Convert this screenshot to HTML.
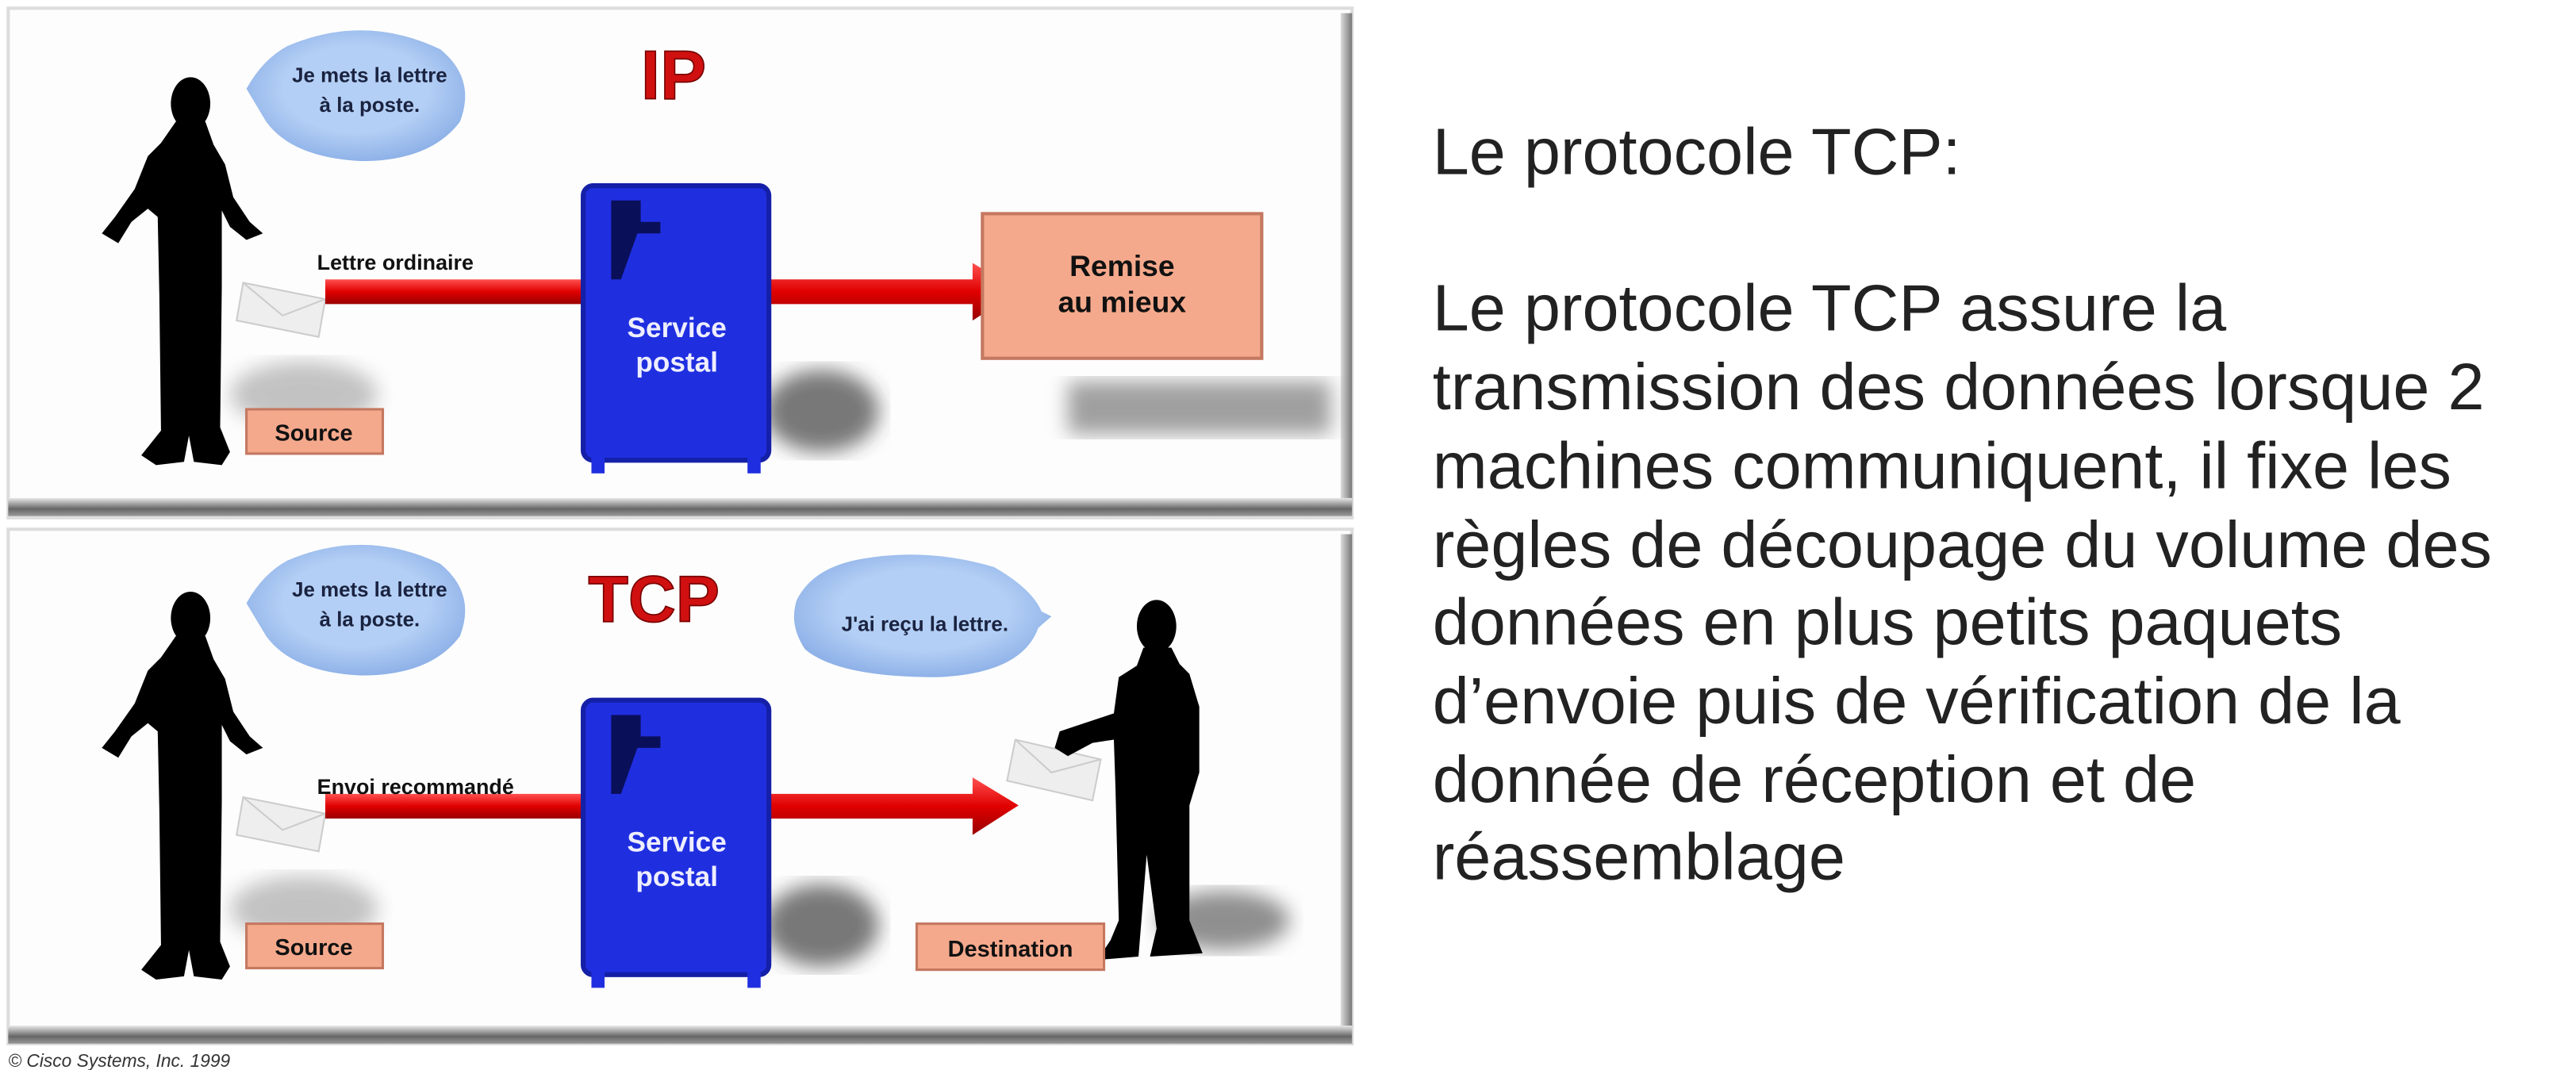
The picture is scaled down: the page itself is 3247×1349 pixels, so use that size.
<!DOCTYPE html>
<html><head><meta charset="utf-8"><style>
html,body{margin:0;padding:0;background:#fff;overflow:hidden}
svg{display:block}
</style></head><body>
<svg width="3247" height="1349" viewBox="0 0 1568 651" preserveAspectRatio="none" xmlns="http://www.w3.org/2000/svg">
<defs>
<linearGradient id="bb" x1="0" y1="0" x2="0" y2="1"><stop offset="0" stop-color="#e8e8e8"/><stop offset="0.6" stop-color="#666"/><stop offset="1" stop-color="#999"/></linearGradient>
<linearGradient id="rb" x1="0" y1="0" x2="1" y2="0"><stop offset="0" stop-color="#ddd"/><stop offset="1" stop-color="#777"/></linearGradient>
<linearGradient id="arr" x1="0" y1="0" x2="0" y2="1"><stop offset="0" stop-color="#ff5050"/><stop offset="0.5" stop-color="#e00000"/><stop offset="1" stop-color="#900"/></linearGradient>
<radialGradient id="bub" cx="0.5" cy="0.45" r="0.55"><stop offset="0.6" stop-color="#b4cff5"/><stop offset="1" stop-color="#8fb2e8"/></radialGradient>
<filter id="bl"><feGaussianBlur stdDeviation="6"/></filter>
<g id="man">
<ellipse cx="116" cy="63" rx="12" ry="16"/>
<path d="M107,74 L125,74 L130,88 L137,100 L142,120 L152,135 L160,142 L150,146 L140,138 L135,128 L135,175 L134,260 L140,275 L135,283 L118,281 L115,265 L112,281 L95,283 L86,277 L98,262 L97,180 L96,132 L90,127 L80,135 L72,148 L62,142 L70,132 L82,115 L90,95 L98,87 Z"/>
</g>
<g id="env"><path d="M148,172 L198,182 L194,205 L144,195 Z" fill="#eee" stroke="#ccc" stroke-width="1"/><path d="M148,172 L172,192 L198,182" fill="none" stroke="#ccc"/></g>
<g id="box">
<rect x="355" y="113" width="113" height="167" rx="6" fill="#1f2fe0"/>
<rect x="355" y="113" width="113" height="167" rx="6" fill="none" stroke="#1520a8" stroke-width="3"/>
<path d="M372,122 L390,122 L390,135 L402,135 L402,142 L388,142 L378,170 L372,170 Z" fill="#0a0f5a"/>
<rect x="360" y="278" width="8" height="10" fill="#1f2fe0"/><rect x="455" y="278" width="8" height="10" fill="#1f2fe0"/>
<text x="412" y="205" font-family="Liberation Sans,sans-serif" font-weight="bold" font-size="17" fill="#eef" text-anchor="middle">Service</text>
<text x="412" y="226" font-family="Liberation Sans,sans-serif" font-weight="bold" font-size="17" fill="#eef" text-anchor="middle">postal</text>
</g>
</defs>

<!-- TOP PANEL -->
<rect x="5" y="5" width="818" height="310" fill="#fdfdfd" stroke="#ddd" stroke-width="2"/>
<rect x="816" y="8" width="7" height="300" fill="url(#rb)"/>
<rect x="5" y="303" width="818" height="11" fill="url(#bb)"/>
<ellipse cx="185" cy="240" rx="45" ry="20" fill="#888" opacity="0.5" filter="url(#bl)"/>
<ellipse cx="500" cy="250" rx="35" ry="25" fill="#333" opacity="0.65" filter="url(#bl)"/>
<rect x="650" y="232" width="160" height="32" fill="#888" opacity="0.8" filter="url(#bl)"/>
<path d="M150,54 Q160,36 175,28 Q222,8 268,30 Q290,48 280,74 Q262,98 220,98 Q178,96 162,74 Z" fill="url(#bub)"/>
<text x="225" y="50" font-family="Liberation Sans,sans-serif" font-weight="bold" font-size="12.5" fill="#1a2340" text-anchor="middle">Je mets la lettre</text>
<text x="225" y="68" font-family="Liberation Sans,sans-serif" font-weight="bold" font-size="12.5" fill="#1a2340" text-anchor="middle">à la poste.</text>
<text x="410" y="60" font-family="Liberation Sans,sans-serif" font-weight="bold" font-size="42" fill="#d01010" text-anchor="middle" stroke="#700" stroke-width="0.8">IP</text>
<use href="#man"/>
<use href="#env"/>
<rect x="198" y="170" width="160" height="15" fill="url(#arr)"/>
<path d="M466,170 L592,170 L592,160 L620,177 L592,195 L592,185 L466,185 Z" fill="url(#arr)"/>
<text x="193" y="164" font-family="Liberation Sans,sans-serif" font-weight="bold" font-size="13" fill="#111">Lettre ordinaire</text>
<use href="#box"/>
<rect x="598" y="130" width="170" height="88" fill="#f5a98c" stroke="#c47860" stroke-width="2"/>
<text x="683" y="168" font-family="Liberation Sans,sans-serif" font-weight="bold" font-size="18" fill="#111" text-anchor="middle">Remise</text>
<text x="683" y="190" font-family="Liberation Sans,sans-serif" font-weight="bold" font-size="18" fill="#111" text-anchor="middle">au mieux</text>
<rect x="150" y="249" width="83" height="27" fill="#f5a98c" stroke="#c47860" stroke-width="1.5"/>
<text x="191" y="268" font-family="Liberation Sans,sans-serif" font-weight="bold" font-size="14" fill="#111" text-anchor="middle">Source</text>

<!-- BOTTOM PANEL -->
<rect x="5" y="322" width="818" height="313" fill="#fdfdfd" stroke="#ddd" stroke-width="2"/>
<rect x="816" y="325" width="7" height="300" fill="url(#rb)"/>
<rect x="5" y="624" width="818" height="11" fill="url(#bb)"/>
<g transform="translate(0,313)">
<ellipse cx="185" cy="240" rx="45" ry="20" fill="#888" opacity="0.5" filter="url(#bl)"/>
<ellipse cx="500" cy="250" rx="35" ry="25" fill="#333" opacity="0.65" filter="url(#bl)"/>
<path d="M150,54 Q160,36 175,28 Q222,8 268,30 Q290,48 280,74 Q262,98 220,98 Q178,96 162,74 Z" fill="url(#bub)"/>
<text x="225" y="50" font-family="Liberation Sans,sans-serif" font-weight="bold" font-size="12.5" fill="#1a2340" text-anchor="middle">Je mets la lettre</text>
<text x="225" y="68" font-family="Liberation Sans,sans-serif" font-weight="bold" font-size="12.5" fill="#1a2340" text-anchor="middle">à la poste.</text>
<use href="#man"/>
<use href="#env"/>
<rect x="198" y="170" width="160" height="15" fill="url(#arr)"/>
<path d="M466,170 L592,170 L592,160 L620,177 L592,195 L592,185 L466,185 Z" fill="url(#arr)"/>
<text x="193" y="170" font-family="Liberation Sans,sans-serif" font-weight="bold" font-size="13" fill="#111">Envoi recommandé</text>
<use href="#box"/>
<rect x="150" y="249" width="83" height="27" fill="#f5a98c" stroke="#c47860" stroke-width="1.5"/>
<text x="191" y="268" font-family="Liberation Sans,sans-serif" font-weight="bold" font-size="14" fill="#111" text-anchor="middle">Source</text>
</g>
<text x="398" y="378" font-family="Liberation Sans,sans-serif" font-weight="bold" font-size="40" fill="#d01010" text-anchor="middle" stroke="#700" stroke-width="0.8">TCP</text>
<ellipse cx="745" cy="560" rx="40" ry="18" fill="#555" opacity="0.65" filter="url(#bl)"/>
<path d="M485,365 Q495,345 525,340 Q565,333 605,345 Q628,358 634,372 L640,375 L632,382 Q622,410 570,412 Q510,412 490,395 Q480,380 485,365 Z" fill="url(#bub)"/>
<text x="563" y="384" font-family="Liberation Sans,sans-serif" font-weight="bold" font-size="12.5" fill="#1a2340" text-anchor="middle">J'ai reçu la lettre.</text>
<path d="M618,450 L670,462 L665,487 L613,475 Z" fill="#eee" stroke="#ccc"/>
<path d="M618,450 L640,470 L670,462" fill="none" stroke="#ccc"/>
<g fill="#000">
<ellipse cx="704" cy="381" rx="12" ry="16"/>
<path d="M696,394 L713,394 L718,404 L724,410 L730,430 L730,470 L724,490 L724,560 L732,580 L700,582 L704,565 L698,520 L693,582 L668,584 L676,572 L681,560 L679,480 L678,450 L665,452 L650,460 L642,455 L645,445 L660,440 L678,434 L681,412 L692,405 Z"/>
</g>
<rect x="558" y="562" width="114" height="28" fill="#f5a98c" stroke="#c47860" stroke-width="1.5"/>
<text x="615" y="582" font-family="Liberation Sans,sans-serif" font-weight="bold" font-size="14" fill="#111" text-anchor="middle">Destination</text>

<text x="5" y="649" font-family="Liberation Sans,sans-serif" font-style="italic" font-size="11" fill="#333">© Cisco Systems, Inc. 1999</text>

<!-- RIGHT TEXT -->
<g font-family="Liberation Sans,sans-serif" font-size="40" fill="#222">
<text x="872" y="106">Le protocole TCP:</text>
<text x="872" y="201">Le protocole TCP assure la</text>
<text x="872" y="249">transmission des données lorsque 2</text>
<text x="872" y="297">machines communiquent, il fixe les</text>
<text x="872" y="345">règles de découpage du volume des</text>
<text x="872" y="392">données en plus petits paquets</text>
<text x="872" y="440">d’envoie puis de vérification de la</text>
<text x="872" y="488">donnée de réception et de</text>
<text x="872" y="535">réassemblage</text>
</g>
</svg>
</body></html>
